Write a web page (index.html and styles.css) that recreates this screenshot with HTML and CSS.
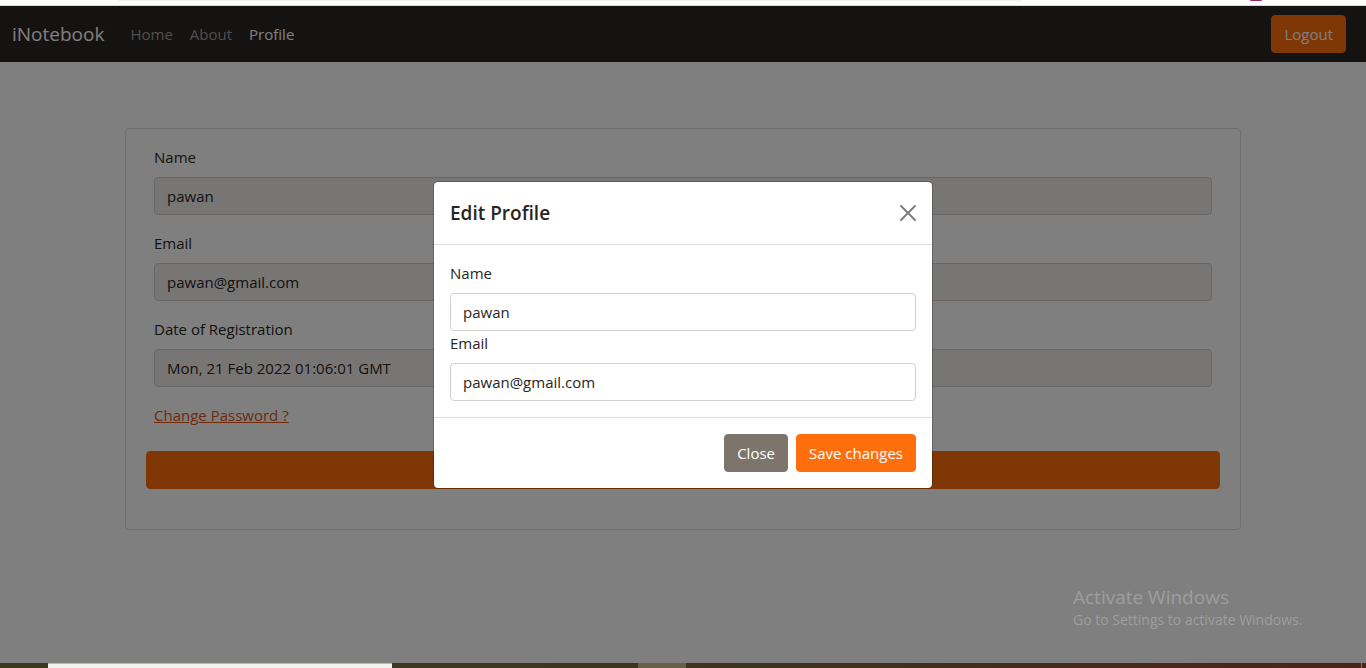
FILE: index.html
```
<!DOCTYPE html>
<html lang="en">
<head>
<meta charset="utf-8">
<meta name="viewport" content="width=device-width, initial-scale=1">
<title>iNotebook</title>
<link rel="stylesheet" href="styles.css">
</head>
<body>
<div class="browser-edge"><span class="bookmark-bar"></span><span class="browser-badge"></span></div>
<div class="app">
  <nav class="navbar">
    <a class="brand" href="#">iNotebook</a>
    <div class="nav-links">
      <a class="nav-link" href="#">Home</a>
      <a class="nav-link" href="#">About</a>
      <a class="nav-link active" href="#">Profile</a>
    </div>
    <button class="btn btn-primary logout" type="button">Logout</button>
  </nav>
  <main class="container">
    <form class="card">
      <div class="fields">
        <div class="field">
          <label for="name">Name</label>
          <input class="control" id="name" type="text" value="pawan" disabled>
        </div>
        <div class="field">
          <label for="email">Email</label>
          <input class="control" id="email" type="text" value="pawan@gmail.com" disabled>
        </div>
        <div class="field">
          <label for="date">Date of Registration</label>
          <input class="control" id="date" type="text" value="Mon, 21 Feb 2022 01:06:01 GMT" disabled>
        </div>
        <a class="password-link" href="#">Change Password ?</a>
      </div>
      <button class="btn btn-primary edit" type="button" aria-label="Edit Profile"></button>
    </form>
  </main>
  <div class="backdrop">
    <section class="modal" role="dialog" aria-labelledby="modal-title">
      <header class="modal-header">
        <h5 class="modal-title" id="modal-title">Edit Profile</h5>
        <button class="close" type="button" aria-label="Close dialog">
          <svg viewBox="0 0 16 16" width="16" height="16"><path d="M1 1 15 15M15 1 1 15" fill="none" stroke="currentColor" stroke-width="1.9" stroke-linecap="round"/></svg>
        </button>
      </header>
      <div class="modal-body">
        <label for="edit-name">Name</label>
        <input class="control" id="edit-name" type="text" value="pawan">
        <label for="edit-email">Email</label>
        <input class="control" id="edit-email" type="text" value="pawan@gmail.com">
      </div>
      <footer class="modal-footer">
        <button class="btn btn-secondary" type="button">Close</button>
        <button class="btn btn-primary" type="button">Save changes</button>
      </footer>
    </section>
  </div>
  <aside class="watermark">
    <p class="watermark-title">Activate Windows</p>
    <p class="watermark-text">Go to Settings to activate Windows.</p>
  </aside>
</div>
<div class="taskbar"><span class="task-search"></span><span class="task-active"></span><span class="show-desktop"></span></div>
</body>
</html>
```
FILE: styles.css
```
* { box-sizing: border-box; }

body {
  margin: 0;
  min-height: 100vh;
  display: flex;
  flex-direction: column;
  background: #fff;
  color: #292521;
  font: 15px/24px "Segoe UI", "Open Sans", "Noto Sans", sans-serif;
}

.browser-edge {
  display: flex;
  justify-content: space-between;
  height: 6px;
  padding: 0 104px 0 118px;
  border-bottom: 1px solid #dadcd8;
}
.bookmark-bar { width: 79%; height: 1px; background: #eeefef; }
.browser-badge { width: 12px; height: 1px; background: #8f2a60; border-radius: 0 0 6px 6px; }

.app { position: relative; flex: 1; display: flex; flex-direction: column; }

.navbar {
  display: flex;
  align-items: center;
  min-height: 56px;
  padding: 8px 20px 8px 12px;
  background: #2a2622;
}
.brand { margin-right: 18px; color: #fff; font-size: 19px; line-height: 30px; text-decoration: none; }
.nav-links { display: flex; flex: 1; gap: 1px; }
.nav-link { padding: 8px; color: #a09e9c; text-decoration: none; }
.nav-link.active { color: #fff; }

.container { width: 100%; max-width: 1140px; margin: 0 auto; padding: 66px 12px 24px; }
.card {
  display: flex;
  flex-direction: column;
  padding: 16px 20px 40px;
  border: 1px solid #dedede;
  border-radius: 4px;
}
.fields { padding: 0 8px; }
.field { margin-bottom: 16px; }

label { display: block; margin-bottom: 8px; }
.control {
  display: block;
  width: 100%;
  height: 38px;
  padding: 6px 12px;
  border: 1px solid #d2cfcb;
  border-radius: 4px;
  background: #fff;
  color: #292521;
  font: inherit;
}
.control:disabled { background: #f0edea; }
.password-link { display: inline-block; color: #de541a; }
.edit { margin-top: 24px; }

.btn {
  height: 38px;
  padding: 6px 12px;
  border: 1px solid transparent;
  border-radius: 4px;
  color: #fff;
  font: inherit;
}
.btn-primary { background: #ff6e0d; border-color: #ff6e0d; }
.btn-secondary { background: #7d756c; border-color: #7d756c; }

.backdrop {
  position: absolute;
  inset: 0;
  display: flex;
  align-items: center;
  justify-content: center;
  background: rgba(0, 0, 0, 0.5);
}
.modal {
  width: 500px;
  border: 1px solid rgba(0, 0, 0, 0.2);
  border-radius: 5px;
  background: #fff;
  background-clip: padding-box;
}
.modal-header {
  display: flex;
  align-items: center;
  justify-content: space-between;
  padding: 16px;
  border-bottom: 1px solid #dedede;
}
.modal-title { margin: 0; font-size: 19px; line-height: 30px; font-weight: 600; }
.close { display: flex; padding: 0; border: 0; background: none; color: #7c7c7c; }
.modal-body { padding: 16px; }
.modal-footer {
  display: flex;
  justify-content: flex-end;
  gap: 8px;
  padding: 16px;
  border-top: 1px solid #dedede;
}

.watermark { position: absolute; right: 57px; bottom: 33px; width: 236px; color: #9e9e9e; white-space: nowrap; }
.watermark p { margin: 0; }
.watermark-title { font-size: 19px; line-height: 26px; }
.watermark-text { font-size: 14px; line-height: 20px; }

.taskbar {
  display: flex;
  height: 5px;
  padding-left: 48px;
  background: linear-gradient(90deg, #3d3820, #3d3520 45%, #40301c 65%, #48271c 85%, #4a241b);
}
.task-search { width: 344px; background: #f2f2f0; border-top: 1px solid #bbb9b3; }
.task-active { width: 48px; margin-left: 246px; background: #655f4c; }
.show-desktop { width: 1px; margin: 0 4px 0 auto; background: #8b7770; }
```
